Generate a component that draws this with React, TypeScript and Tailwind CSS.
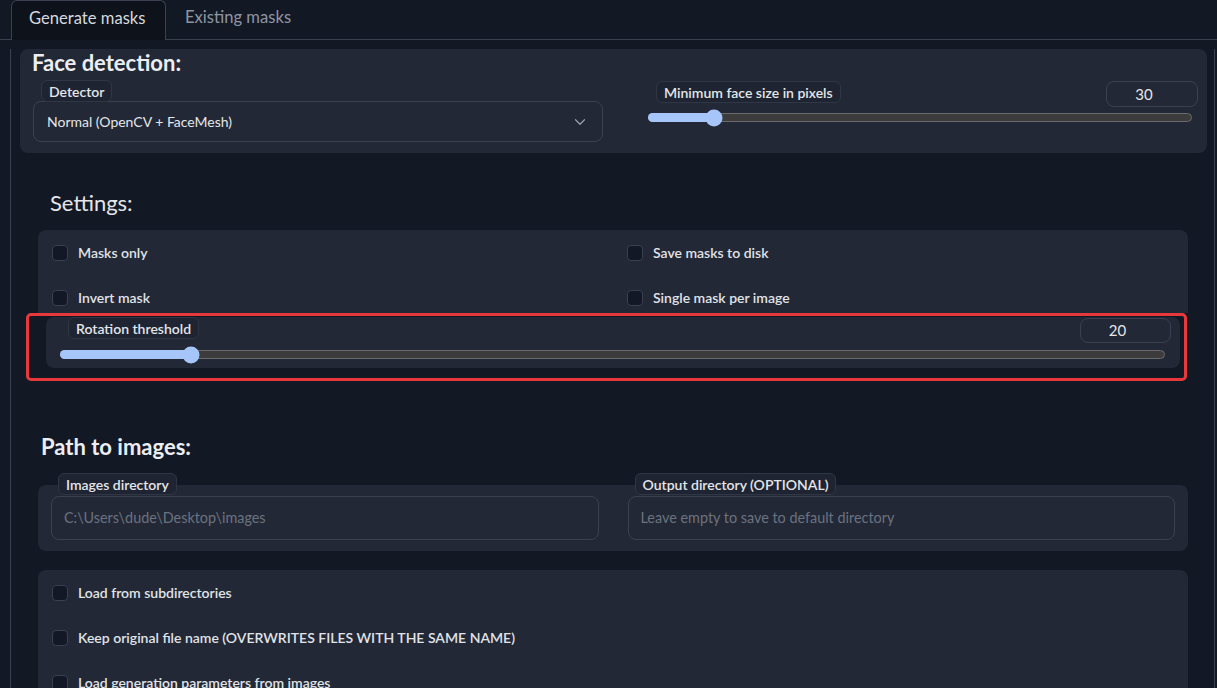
import { ChevronDown } from "lucide-react";

const PANEL = "bg-[#222835]";

function Badge({ children, className = "" }: { children: string; className?: string }) {
  return (
    <span className={`inline-flex h-[22px] items-center rounded-[6px] border border-[#2f3644] bg-[#1e2431] px-[7px] text-[14px] font-semibold text-[#e4e6ea] ${className}`}>
      {children}
    </span>
  );
}

function Track({ pct, className = "" }: { pct: number; className?: string }) {
  return (
    <div className={`relative h-[9px] rounded-full border border-[#6a6a6a] bg-[#3c3c3c] ${className}`}>
      <div className="absolute -left-px -top-px h-[9px] rounded-full bg-[#a6c6fa]" style={{ width: `${pct}%` }} />
      <div className="absolute top-1/2 h-[17px] w-[17px] -translate-x-1/2 -translate-y-1/2 rounded-full bg-[#a6c6fa]" style={{ left: `${pct}%` }} />
    </div>
  );
}

function NumBox({ v, className = "" }: { v: string; className?: string }) {
  return (
    <div className={`flex items-center justify-center rounded-[8px] border border-[#3a4150] pr-[16px] text-[15px] text-[#e4e6ea] ${className}`}>{v}</div>
  );
}

function Check({ label }: { label: string }) {
  return (
    <div className="flex h-[45px] items-center gap-[10px] pl-[14px]">
      <span className="h-[16px] w-[16px] rounded-[4px] border border-[#394050] bg-[#131826]" />
      <span className="text-[14px] font-semibold text-[#e0e3e8]">{label}</span>
    </div>
  );
}

function PathField({ label, placeholder }: { label: string; placeholder: string }) {
  return (
    <div className="flex-1">
      <div className="-mt-[12px] flex pl-[7px]">
        <Badge>{label}</Badge>
      </div>
      <div className="mt-[1px] flex h-[44px] items-center rounded-[8px] border border-[#3a4150] pl-[12px] text-[14.4px] text-[#6c7280]">
        {placeholder}
      </div>
    </div>
  );
}

export default function App() {
  return (
    <div className="h-[688px] w-[1217px] overflow-hidden bg-[#131825] font-['Lato','Noto_Sans',sans-serif] text-[#e4e6ea]">
      {/* tabs */}
      <div className="flex h-[40px]">
        <div className="w-[11px] border-b border-[#3a4150]" />
        <div className="flex h-[40px] w-[155px] items-center rounded-t-[6px] border border-b-0 border-[#3a4150] bg-[#0e121b] pb-[4px] pl-[17px] text-[16.6px] text-[#d6d9df]">
          Generate masks
        </div>
        <div className="flex flex-1 items-center border-b border-[#3a4150] pb-[4px] pl-[19px] text-[16.6px] text-[#8e95a2]">Existing masks</div>
      </div>

      <div className="ml-[10px] h-[648px] w-[1205px] border-x border-[#3a4150]">
        {/* face detection */}
        <div className={`ml-[9px] mt-[9px] h-[104px] w-[1187px] rounded-[8px] ${PANEL}`}>
          <div className="pl-[12px] text-[22px] font-bold leading-[28px] text-[#eceef1]">Face detection:</div>
          <div className="flex pl-[13px]">
            <div className="w-[570px]">
              <div className="mt-[3px] flex pl-[8px]">
                <Badge>Detector</Badge>
              </div>
              <div className="-mt-px flex h-[41px] items-center justify-between rounded-[8px] border border-[#3a4150] pl-[13px] pr-[13px] text-[14px] text-[#e4e6ea]">
                <span>Normal (OpenCV + FaceMesh)</span>
                <ChevronDown size={18} strokeWidth={1.6} className="text-[#9aa1ad]" />
              </div>
            </div>
            <div className="ml-[45px] w-[550px]">
              <div className="mt-[4px] flex h-[26px] items-start justify-between">
                <Badge className="ml-[8px]">Minimum face size in pixels</Badge>
                <NumBox v="30" className="h-[26px] w-[92px]" />
              </div>
              <Track pct={12} className="mr-[6px] mt-[6px]" />
            </div>
          </div>
        </div>

        {/* settings */}
        <div className="ml-[39px] mt-[36px] text-[22px] leading-[28px] text-[#e4e6ea]">Settings:</div>
        <div className={`ml-[27px] mt-[14px] h-[83px] w-[1150px] rounded-t-[8px] ${PANEL}`}>
          <div className="-mt-px grid grid-cols-[575px_1fr]">
            <Check label="Masks only" />
            <Check label="Save masks to disk" />
            <Check label="Invert mask" />
            <Check label="Single mask per image" />
          </div>
        </div>
        <div className="ml-[15px] h-[68px] w-[1161px] rounded-[5px] border-[3px] border-[#e8383c]">
          <div className={`ml-[17px] mr-[4px] mt-[11px] h-[51px] rounded-[8px] ${PANEL}`}>
            <div className="-mt-[10px] flex h-[26px] items-start justify-between pr-[9px]">
              <Badge className="ml-[22px]">Rotation threshold</Badge>
              <NumBox v="20" className="mt-[1px] h-[25px] w-[91px]" />
            </div>
            <Track pct={11.8} className="ml-[14px] mr-[15px] mt-[7px]" />
          </div>
        </div>

        {/* paths */}
        <div className="ml-[30px] mt-[52px] text-[22px] font-bold leading-[28px] text-[#eceef1]">Path to images:</div>
        <div className={`ml-[27px] mt-[24px] flex h-[66px] w-[1150px] gap-[29px] rounded-[8px] px-[13px] ${PANEL}`}>
          <PathField label="Images directory" placeholder="C:\Users\dude\Desktop\images" />
          <PathField label="Output directory (OPTIONAL)" placeholder="Leave empty to save to default directory" />
        </div>

        <div className={`ml-[27px] mt-[20px] h-[200px] w-[1150px] rounded-[8px] ${PANEL}`}>
          <div className="-mt-px">
            <Check label="Load from subdirectories" />
            <Check label="Keep original file name (OVERWRITES FILES WITH THE SAME NAME)" />
            <Check label="Load generation parameters from images" />
          </div>
        </div>
      </div>
    </div>
  );
}
